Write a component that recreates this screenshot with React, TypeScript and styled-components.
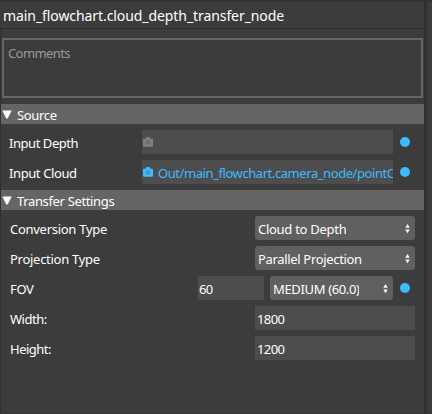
import React from 'react';
import styled, { createGlobalStyle } from 'styled-components';

const GlobalStyle = createGlobalStyle`
  * { box-sizing: border-box; }
  body {
    margin: 0;
    background: #3c3c3c;
    overflow: hidden;
    font-family: 'Noto Sans', sans-serif;
    font-size: 13px;
    color: #fff;
  }
`;

const Page = styled.div`
  display: flex;
  width: 432px;
  height: 414px;
  border-top: 2px solid #303030;
  border-bottom: 1px solid #353535;
`;

const Panel = styled.main`
  width: 427px;
  height: 411px;
  border-right: 3px solid #303030;
  background: #3c3c3c;
`;

const Title = styled.h1`
  margin: 0;
  height: 27px;
  padding-left: 3px;
  border-bottom: 1px solid #303030;
  font-size: 14px;
  font-weight: 400;
  line-height: 28px;
  letter-spacing: -0.08px;
  white-space: nowrap;
`;

const Body = styled.div`
  height: 384px;
  border-left: 1px solid #303030;
  padding-top: 9px;
`;

const Comments = styled.textarea`
  display: block;
  width: 421px;
  height: 60px;
  margin: 0 0 6px 1px;
  padding: 4px 4px;
  border: 2px solid #666;
  border-radius: 0;
  outline: none;
  resize: none;
  background: #3c3c3c;
  color: #fff;
  font: 13px/18px 'Noto Sans', sans-serif;
  letter-spacing: -0.6px;
  &::placeholder { color: #999; opacity: 1; }
`;

const SectionBar = styled.header`
  display: flex;
  align-items: center;
  height: 20px;
  padding-left: 1px;
  gap: 5px;
  background: #656565;
`;

const SectionName = styled.span`
  line-height: 20px;
  padding-top: 2px;
  letter-spacing: -0.35px;
`;

const Rows = styled.div<{ $inset: number }>`
  display: flex;
  flex-direction: column;
  gap: 6px;
  padding: 6px 0 6px ${(p) => p.$inset}px;
`;

const Row = styled.div`
  display: flex;
  height: 24px;
`;

const Label = styled.label<{ $width: number; $spacing: number }>`
  flex: none;
  width: ${(p) => p.$width}px;
  line-height: 26px;
  letter-spacing: ${(p) => p.$spacing}px;
  white-space: nowrap;
`;

const Field = styled.div<{ $width: number; $pad?: number; $before?: number }>`
  display: flex;
  flex: none;
  width: ${(p) => p.$width}px;
  height: 24px;
  margin-right: ${(p) => p.$before ?? 0}px;
  padding-left: ${(p) => p.$pad ?? 2}px;
  background: #4d4d4d;
  line-height: 26px;
  letter-spacing: -0.6px;
  white-space: nowrap;
  overflow: hidden;
`;

const LinkText = styled.span`
  margin-left: 5px;
  color: #3dbbff;
  letter-spacing: -0.43px;
  overflow: hidden;
`;

const Select = styled.div<{ $width: number }>`
  display: flex;
  flex: none;
  justify-content: space-between;
  width: ${(p) => p.$width}px;
  height: 24px;
  padding: 0 5px 0 3px;
  border-radius: 3px;
  background: #606060;
  line-height: 26px;
  white-space: nowrap;
`;

const SelectText = styled.span<{ $spacing: number; $clip?: number }>`
  width: ${(p) => (p.$clip ? `${p.$clip}px` : 'auto')};
  overflow: hidden;
  letter-spacing: ${(p) => p.$spacing}px;
`;

const Dot = styled.span`
  flex: none;
  width: 10px;
  height: 10px;
  margin: 7px 0 0 7px;
  border-radius: 50%;
  background: #3dbbff;
`;

const Glyph = styled.svg`
  display: block;
  flex: none;
`;

const CameraGlyph = styled(Glyph)`
  margin: 7px 0 0 -1px;
`;

const ArrowGlyph = styled(Glyph)`
  margin-top: 8px;
`;

const Camera = ({ color }: { color: string }) => (
  <CameraGlyph width="10" height="10" viewBox="0 0 10 10">
    <path
      fill={color}
      d="M1 1.8H2.5L3.2.5Q3.4 0 4 0H6Q6.6 0 6.8.5L7.5 1.8H9Q10 1.8 10 2.8V8.8Q10 9.8 9 9.8H1Q0 9.8 0 8.8V2.8Q0 1.8 1 1.8Z"
    />
    <circle cx="5" cy="5.5" r="1.6" fill="none" stroke="#4d4d4d" strokeOpacity="0.75" strokeWidth="0.9" />
  </CameraGlyph>
);

const Section = ({ name }: { name: string }) => (
  <SectionBar>
    <Glyph width="10" height="9" viewBox="0 0 10 9">
      <path fill="#fff" d="M.3.5H9.7L5.7 8.5H4.3Z" />
    </Glyph>
    <SectionName>{name}</SectionName>
  </SectionBar>
);

const Choice = ({ text, width, spacing, clip }: { text: string; width: number; spacing: number; clip?: number }) => (
  <Select $width={width}>
    <SelectText $spacing={spacing} $clip={clip}>{text}</SelectText>
    <ArrowGlyph width="5" height="10" viewBox="0 0 5 10">
      <path fill="#fff" d="M2.5 0L4.7 3.8H.3ZM.3 5.5H4.7L2.5 9.3Z" />
    </ArrowGlyph>
  </Select>
);

export default function App() {
  return (
    <>
      <GlobalStyle />
      <Page>
        <Panel>
          <Title>main_flowchart.cloud_depth_transfer_node</Title>
          <Body>
            <Comments placeholder="Comments" spellCheck={false} />
            <Section name="Source" />
            <Rows $inset={8}>
              <Row>
                <Label $width={133} $spacing={-0.45}>Input Depth</Label>
                <Field $width={251}><Camera color="#808080" /></Field>
                <Dot />
              </Row>
              <Row>
                <Label $width={133} $spacing={-0.4}>Input Cloud</Label>
                <Field $width={251}>
                  <Camera color="#3dbbff" />
                  <LinkText>Out/main_flowchart.camera_node/pointC</LinkText>
                </Field>
                <Dot />
              </Row>
            </Rows>
            <Section name="Transfer Settings" />
            <Rows $inset={9}>
              <Row>
                <Label $width={245} $spacing={-0.28}>Conversion Type</Label>
                <Choice width={160} text="Cloud to Depth" spacing={-0.28} />
              </Row>
              <Row>
                <Label $width={245} $spacing={-0.28}>Projection Type</Label>
                <Choice width={160} text="Parallel Projection" spacing={-0.33} />
              </Row>
              <Row>
                <Label $width={188} $spacing={-0.35}>FOV</Label>
                <Field $width={66} $pad={1} $before={6}>60</Field>
                <Choice width={123} text="MEDIUM (60.0)" spacing={-0.35} clip={86} />
                <Dot />
              </Row>
              <Row>
                <Label $width={245} $spacing={-0.5}>Width:</Label>
                <Field $width={160}>1800</Field>
              </Row>
              <Row>
                <Label $width={245} $spacing={-0.5}>Height:</Label>
                <Field $width={160}>1200</Field>
              </Row>
            </Rows>
          </Body>
        </Panel>
      </Page>
    </>
  );
}
